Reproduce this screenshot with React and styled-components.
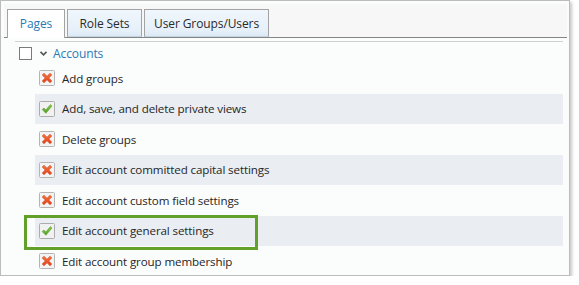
import React from "react";
import styled, { createGlobalStyle } from "styled-components";

const GlobalStyle = createGlobalStyle`
  html, body { margin: 0; padding: 0; background: #ffffff; }
  body { font-family: "Open Sans", "Noto Sans", sans-serif; }
`;

const Frame = styled.div`
  position: relative;
  box-sizing: border-box;
  width: 570px;
  height: 276px;
  border: 1px solid #bcbcbc;
  box-shadow: 2px 2px 3px rgba(0, 0, 0, 0.22);
  padding: 3px 2px 0 3px;
  background: #fbfcfc;
  display: flex;
  flex-direction: column;
  overflow: visible;
`;

const TabStrip = styled.div`
  box-sizing: border-box;
  height: 34px;
  background: #f7f7f7;
  border-bottom: 1px solid #858585;
  padding: 5px 0 0 3px;
  display: flex;
  align-items: flex-end;
  gap: 2px;
`;

const Tab = styled.div`
  box-sizing: border-box;
  height: ${(p) => (p.$active ? "29px" : "28px")};
  margin-bottom: ${(p) => (p.$active ? "-1px" : "0")};
  width: ${(p) => p.$w}px;
  border: 1px solid #a3a3a3;
  border-bottom: ${(p) => (p.$active ? "none" : "1px solid #c4d3e0")};
  background: ${(p) =>
    p.$active ? "#ffffff" : "linear-gradient(#f0f6fc 0%, #e6f0f9 80%, #dce9f5 100%)"};
  color: ${(p) => (p.$active ? "#2a7ab3" : "#2b2b2b")};
  font-size: 12px;
  letter-spacing: -0.1px;
  display: flex;
  align-items: center;
  justify-content: center;
  padding-bottom: ${(p) => (p.$active ? "1px" : "0")};
`;

const List = styled.div`
  margin: 3px 4px 0 11px;
  border-top: 1px solid #cfd2d2;
  display: flex;
  flex-direction: column;
`;

const Header = styled.div`
  height: 19px;
  display: flex;
  align-items: center;
  padding-left: 4px;
  padding-top: 2px;
`;

const Checkbox = styled.span`
  box-sizing: border-box;
  width: 13px;
  height: 13px;
  border: 1px solid #7a7a7a;
  background: #ffffff;
`;

const Chevron = styled.svg`
  margin-left: 8px;
  width: 7px;
  height: 5px;
`;

const GroupLabel = styled.span`
  margin-left: 6px;
  font-size: 12px;
  letter-spacing: -0.1px;
  color: #2a7ab3;
`;

const Row = styled.div`
  position: relative;
  height: 30.5px;
  margin-left: 20px;
  padding-left: 4px;
  display: flex;
  align-items: center;
  gap: 7px;
  background: ${(p) => (p.$shaded ? "#eaedf1" : "transparent")};
`;

const Label = styled.span`
  font-size: 11.6px;
  letter-spacing: -0.12px;
  color: #262626;
`;

const Highlight = styled.div`
  position: absolute;
  left: -11px;
  top: -1px;
  width: 234px;
  height: 35px;
  box-sizing: border-box;
  border: 3px solid #62a02a;
  pointer-events: none;
`;

const IconBox = styled.svg`
  width: 16px;
  height: 16px;
  flex: none;
`;

function DenyIcon() {
  return (
    <IconBox viewBox="0 0 16 16">
      <defs>
        <linearGradient id="xg" x1="0" y1="0" x2="0" y2="1">
          <stop offset="0" stopColor="#f7743e" />
          <stop offset="1" stopColor="#e2401b" />
        </linearGradient>
      </defs>
      <rect x="0.5" y="0.5" width="15" height="15" rx="1" fill="#f3f3f3" stroke="#b4b4b4" />
      <path
        d="M3.2 5 L5 3.2 L8 6.2 L11 3.2 L12.8 5 L9.8 8 L12.8 11 L11 12.8 L8 9.8 L5 12.8 L3.2 11 L6.2 8 Z"
        fill="url(#xg)"
        stroke="#c9471f"
        strokeWidth="0.6"
        strokeLinejoin="round"
      />
    </IconBox>
  );
}

function AllowIcon() {
  return (
    <IconBox viewBox="0 0 16 16">
      <defs>
        <linearGradient id="cg" x1="0" y1="0" x2="0" y2="1">
          <stop offset="0" stopColor="#8ccf4a" />
          <stop offset="1" stopColor="#4f9f23" />
        </linearGradient>
      </defs>
      <rect x="0.5" y="0.5" width="15" height="15" rx="1" fill="#f1f1f1" stroke="#acacac" />
      <path
        d="M3.2 8.6 L5 7 L6.8 9 L11.4 3.6 L13 5 L6.9 12.3 Z"
        fill="url(#cg)"
        stroke="#4c9124"
        strokeWidth="0.5"
        strokeLinejoin="round"
      />
    </IconBox>
  );
}

const items = [
  { label: "Add groups", allow: false },
  { label: "Add, save, and delete private views", allow: true },
  { label: "Delete groups", allow: false },
  { label: "Edit account committed capital settings", allow: false },
  { label: "Edit account custom field settings", allow: false },
  { label: "Edit account general settings", allow: true, highlight: true },
  { label: "Edit account group membership", allow: false },
];

export default function App() {
  return (
    <>
      <GlobalStyle />
      <Frame>
        <TabStrip>
          <Tab $active $w={58}>Pages</Tab>
          <Tab $w={75}>Role Sets</Tab>
          <Tab $w={125}>User Groups/Users</Tab>
        </TabStrip>
        <List>
          <Header>
            <Checkbox />
            <Chevron viewBox="0 0 7 5">
              <path d="M0.5 0.8 L3.5 3.8 L6.5 0.8" fill="none" stroke="#555" strokeWidth="1.6" />
            </Chevron>
            <GroupLabel>Accounts</GroupLabel>
          </Header>
          {items.map((it, i) => (
            <Row key={it.label} $shaded={i % 2 === 1}>
              {it.allow ? <AllowIcon /> : <DenyIcon />}
              <Label>{it.label}</Label>
              {it.highlight && <Highlight />}
            </Row>
          ))}
        </List>
      </Frame>
    </>
  );
}
